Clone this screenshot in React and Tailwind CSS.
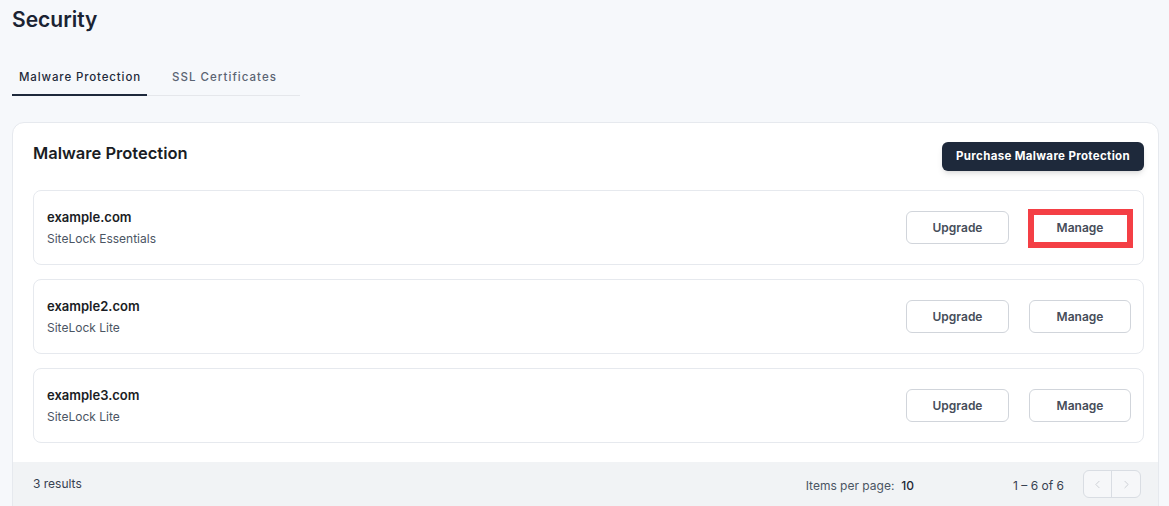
import { ChevronLeft, ChevronRight } from "lucide-react";

const rows = [
  { domain: "example.com", plan: "SiteLock Essentials", highlight: true },
  { domain: "example2.com", plan: "SiteLock Lite" },
  { domain: "example3.com", plan: "SiteLock Lite" },
];

function Row({ domain, plan, highlight }) {
  return (
    <div className="flex items-center justify-between rounded-lg border border-[#e6e9ee] bg-white h-[75px] pl-[13px] pr-[12px]">
      <div className="flex flex-col -mt-[2px]">
        <span className="text-[13px] font-semibold text-[#1a1d24] leading-5">{domain}</span>
        <span className="text-[12px] text-[#4b5563] leading-4 mt-[4px]">{plan}</span>
      </div>
      <div className="flex items-center gap-5">
        <button className="w-[103px] h-[33px] rounded-md border border-[#d1d5db] bg-white text-[12px] font-semibold text-[#464d59]">
          Upgrade
        </button>
        <div className="relative">
          <button className="w-[102px] h-[33px] rounded-md border border-[#d1d5db] bg-white text-[12px] font-semibold text-[#464d59]">
            Manage
          </button>
          {highlight && (
            <div className="absolute -left-[1px] -top-[2px] w-[105px] h-[39px] border-[6px] border-[#f43f45]" />
          )}
        </div>
      </div>
    </div>
  );
}

export default function App() {
  return (
    <div className="h-screen overflow-hidden bg-[#f6f8fb] font-['Inter',sans-serif] pl-3 pr-[10px] pt-[6px]">
      <h1 className="text-[21px] font-semibold text-[#1a2332] leading-7">Security</h1>

      <div className="mt-[29px] flex w-[288px] border-b border-[#e5e7eb] whitespace-nowrap">
        <div className="pl-[7px] pb-[7px] border-b-2 border-[#1e293b] -mb-px w-[135px] shrink-0">
          <span className="text-[11.5px] font-medium tracking-[0.075em] text-[#1f2a3a]">Malware Protection</span>
        </div>
        <div className="pl-[25px] pb-[7px]">
          <span className="text-[11.5px] font-medium tracking-[0.09em] text-[#5b6473]">SSL Certificates</span>
        </div>
      </div>

      <div className="mt-[26px] rounded-xl border border-[#e6e9ee] bg-white overflow-hidden">
        <div className="pl-5 pr-[14px] pt-[18px]">
          <div className="flex items-start justify-between">
            <h2 className="text-[16.5px] font-semibold text-[#1a1d24] leading-6">Malware Protection</h2>
            <button className="mt-[1px] h-[29px] px-[14px] rounded-md bg-[#1e293b] text-white text-[11.5px] font-bold tracking-[0.03em] shadow-md">
              Purchase Malware Protection
            </button>
          </div>
          <div className="mt-[19px] flex flex-col gap-[14px] pb-[19px]">
            {rows.map((r) => (
              <Row key={r.domain} {...r} />
            ))}
          </div>
        </div>
        <div className="bg-[#f1f3f5] h-[60px] flex items-start pt-[12px] pl-5 pr-[17px] text-[12px] text-[#374151]">
          <span className="leading-5">3 results</span>
          <div className="ml-auto flex items-center">
            <span className="text-[#4b5563]">Items per page:</span>
            <span className="ml-[7px] font-medium text-[#1f2937]">10</span>
            <span className="ml-[99px] text-[#374151]">1 – 6 of 6</span>
            <div className="ml-[19px] flex h-[28px] rounded-md border border-[#d9dde3] bg-[#f6f7f9] -mt-[4px]">
              <div className="w-[28px] flex items-center justify-center border-r border-[#d9dde3]">
                <ChevronLeft size={13} strokeWidth={1.5} className="text-[#c4c8ce]" />
              </div>
              <div className="w-[28px] flex items-center justify-center">
                <ChevronRight size={13} strokeWidth={1.5} className="text-[#c4c8ce]" />
              </div>
            </div>
          </div>
        </div>
      </div>
    </div>
  );
}
